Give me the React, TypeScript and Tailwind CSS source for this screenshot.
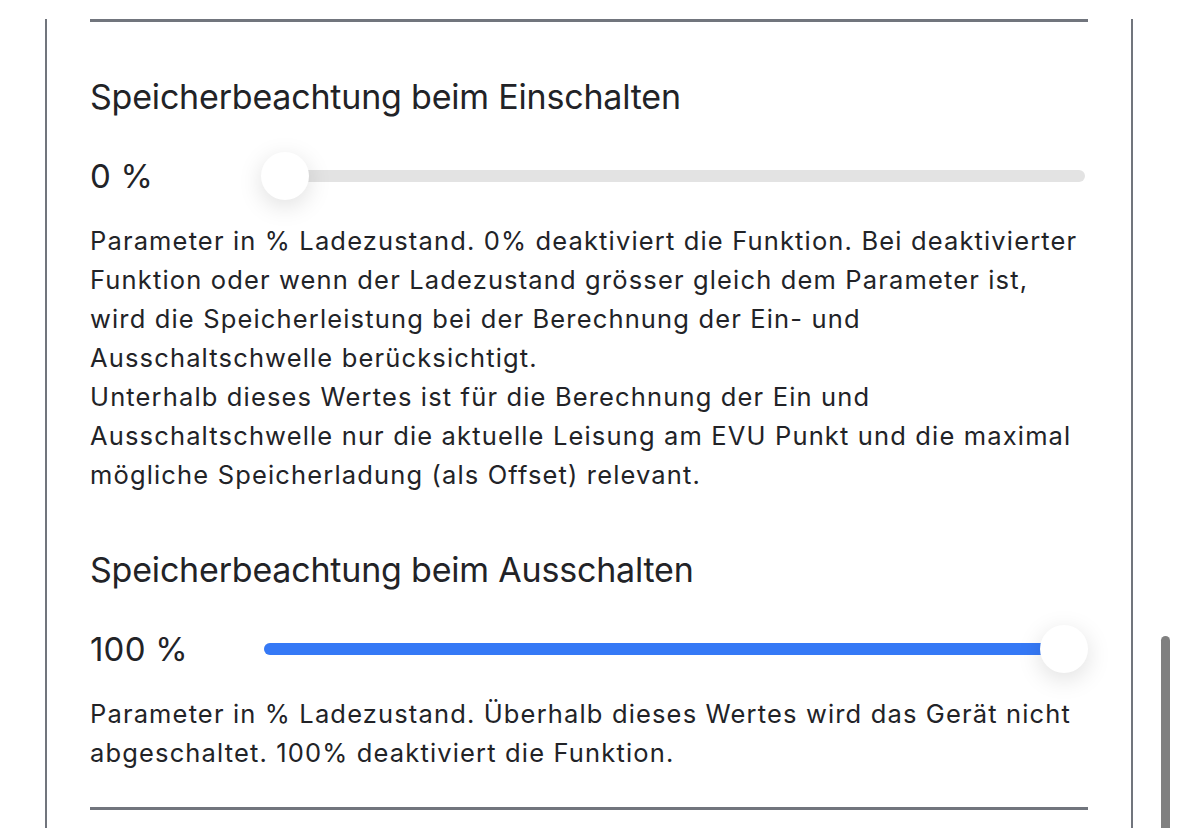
import React from "react";

type SliderProps = { value: number };

const Slider = ({ value }: SliderProps) => {
  const pct = value / 100;
  return (
    <div className="flex items-center h-[48px]">
      <span className="w-[174px] shrink-0 text-[33px] leading-[40px] text-[#222327] tracking-[0.2px]">{value} %</span>
      <div className="relative flex-1 h-[12px] mr-[3px] rounded-full bg-[#e3e3e3]">
        <div className="h-full rounded-full bg-[#3579f6]" style={{ width: `${pct * 100}%` }} />
        <div
          className="absolute top-1/2 -translate-y-1/2 w-[48px] h-[48px] rounded-full bg-white shadow-[0_6px_24px_rgba(0,0,0,0.13)]"
          style={{ left: `calc(${pct} * (100% - 42px) - 3px)` }}
        />
      </div>
    </div>
  );
};

export default function App() {
  return (
    <div className="w-[1179px] h-[828px] bg-white overflow-hidden relative" style={{ fontFamily: "Inter, 'Noto Sans', sans-serif" }}>
      <div className="ml-[45px] w-[1088px] h-[828px] border-x-2 border-[#71757d] px-[43px]">
        <div className="mt-[19px] h-[3px] bg-[#71757d]" />

        <h2 className="mt-[55px] text-[34px] leading-[40px] text-[#222327] tracking-[-0.2px]">Speicherbeachtung beim Einschalten</h2>
        <div className="mt-[35px]">
          <Slider value={0} />
        </div>
        <p className="mt-[21px] text-[25.5px] leading-[39px] text-[#222327] tracking-[1.15px] whitespace-nowrap">
          Parameter in % Ladezustand. 0% deaktiviert die Funktion. Bei deaktivierter
          <br />
          Funktion oder wenn der Ladezustand grösser gleich dem Parameter ist,
          <br />
          wird die Speicherleistung bei der Berechnung der Ein- und
          <br />
          Ausschaltschwelle berücksichtigt.
          <br />
          Unterhalb dieses Wertes ist für die Berechnung der Ein und
          <br />
          Ausschaltschwelle nur die aktuelle Leisung am EVU Punkt und die maximal
          <br />
          mögliche Speicherladung (als Offset) relevant.
        </p>

        <h2 className="mt-[56px] text-[34px] leading-[40px] text-[#222327] tracking-[-0.2px]">Speicherbeachtung beim Ausschalten</h2>
        <div className="mt-[35px]">
          <Slider value={100} />
        </div>
        <p className="mt-[21px] text-[25.5px] leading-[39px] text-[#222327] tracking-[1.15px] whitespace-nowrap">
          Parameter in % Ladezustand. Überhalb dieses Wertes wird das Gerät nicht
          <br />
          abgeschaltet. 100% deaktiviert die Funktion.
        </p>
        <div className="mt-[35px] h-[3px] bg-[#71757d]" />
      </div>
      <div className="absolute left-[1161px] top-[636px] w-[9px] h-[200px] rounded-full bg-[#808080]" />
    </div>
  );
}
